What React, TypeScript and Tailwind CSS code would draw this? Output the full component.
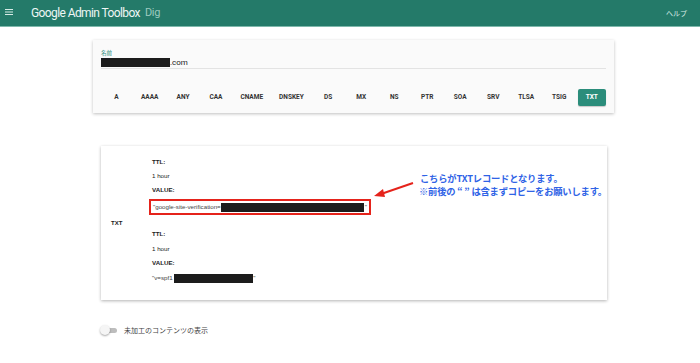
import React from "react";

const types = ["A", "AAAA", "ANY", "CAA", "CNAME", "DNSKEY", "DS", "MX", "NS", "PTR", "SOA", "SRV", "TLSA", "TSIG", "TXT"];

const Redacted = ({ w }: { w: string }) => <span className={`inline-block h-[9px] bg-[#1c1c1c] align-middle ${w}`} />;

const App = () => {
  return (
    <div className="w-[700px] h-[363px] bg-white overflow-hidden font-['Roboto',sans-serif]">
      <header className="h-[26px] bg-[#247a69] flex items-center shadow-[0_1px_0_#7fb8ac]">
        <svg width="8" height="6" viewBox="0 0 8 6" className="ml-[5px] mb-[2px]">
          <rect x="0" y="0" width="8" height="1" fill="#d6ebe6" />
          <rect x="0" y="2.5" width="8" height="1" fill="#d6ebe6" />
          <rect x="0" y="5" width="8" height="1" fill="#d6ebe6" />
        </svg>
        <span className="ml-[18px] text-[12px] text-[#eef6f4] tracking-[-0.6px]">Google Admin Toolbox</span>
        <span className="ml-[5px] text-[11px] text-[#9ccabf] tracking-[-0.3px]">Dig</span>
        <span className="ml-auto mr-[13px] text-[7px] text-[#d8ece7] font-['Noto_Sans_CJK_JP',sans-serif]">ヘルプ</span>
      </header>

      <div className="ml-[93px] mt-[14px] w-[521px] h-[73px] bg-[#fafafa] shadow-[0_1px_3px_rgba(0,0,0,0.25)] pl-[7px] pr-[8px] pt-[10px]">
        <div className="ml-[1px] text-[5.5px] leading-[7px] text-[#2a8a78] font-['Noto_Sans_CJK_JP',sans-serif]">名前</div>
        <div className="ml-[1px] flex items-center h-[12px] border-b border-[#e3e3e3] text-[8px] text-[#222]">
          <Redacted w="w-[69px]" />
          <span>.com</span>
        </div>
        <div className="flex items-center mt-[20px]">
          {types.map((t) =>
            t === "TXT" ? (
              <div key={t} className="ml-[2px] w-[28px] h-[17px] rounded-[2px] bg-[#2b8d7b] text-white text-[6.5px] font-bold flex items-center justify-center shadow-[0_1px_1px_rgba(0,0,0,0.2)]">
                {t}
              </div>
            ) : (
              <div key={t} className="min-w-[33px] px-[8px] h-[17px] text-[6.5px] font-bold text-[#333] flex items-center justify-center">
                {t}
              </div>
            )
          )}
        </div>
      </div>

      <div className="relative ml-[101px] mt-[33px] w-[506px] h-[154px] bg-white shadow-[0_1px_3px_rgba(0,0,0,0.3)] flex font-['Liberation_Sans',sans-serif] text-[#222]">
        <div className="w-[51px] pl-[10px] text-[6px] font-bold self-center">TXT</div>
        <div className="flex flex-col text-[6.2px] leading-[14px] pt-[9px]">
          <div className="font-bold">TTL:</div>
          <div>1 hour</div>
          <div className="font-bold">VALUE:</div>
          <div className="-ml-[3px] mt-[2px] w-[222px] h-[16px] border-2 border-[#e5231b] flex items-center pl-[2px] text-[#444]">
            <span>"google-site-verification=</span>
            <Redacted w="w-[143px]" />
            <span className="ml-[1px]">"</span>
          </div>
          <div className="font-bold mt-[12px]">TTL:</div>
          <div className="leading-[15px]">1 hour</div>
          <div className="font-bold">VALUE:</div>
          <div className="flex items-center text-[#444] mt-[1px]">
            <span>"v=spf1&nbsp;</span>
            <Redacted w="w-[79px]" />
            <span>"</span>
          </div>
        </div>

        <svg className="absolute left-[272px] top-[34px]" width="42" height="20" viewBox="0 0 42 20">
          <line x1="40" y1="3" x2="8" y2="14" stroke="#e5231b" strokeWidth="2" />
          <polygon points="1,16 10,9 12,17" fill="#e5231b" />
        </svg>
        <div className="absolute left-[318px] top-[26px] whitespace-nowrap text-[9.3px] leading-[13px] font-bold text-[#2f63e6] font-['Noto_Sans_CJK_JP',sans-serif] tracking-[-0.2px]">
          <div className="pl-[1px]">こちらがTXTレコードとなります。</div>
          <div>※前後の “ ” は含まずコピーをお願いします。</div>
        </div>
      </div>

      <div className="ml-[100px] mt-[25px] flex items-center">
        <div className="relative w-[17px] h-[8px] flex items-center">
          <div className="ml-[2px] w-[15px] h-[5px] rounded-full bg-[#bdbdbd]" />
          <div className="absolute left-0 top-[-1px] w-[10px] h-[10px] rounded-full bg-[#f5f5f5] shadow-[0_1px_2px_rgba(0,0,0,0.35)]" />
        </div>
        <span className="ml-[7px] text-[7px] text-[#444] font-['Noto_Sans_CJK_JP',sans-serif]">未加工のコンテンツの表示</span>
      </div>
    </div>
  );
};

export default App;
